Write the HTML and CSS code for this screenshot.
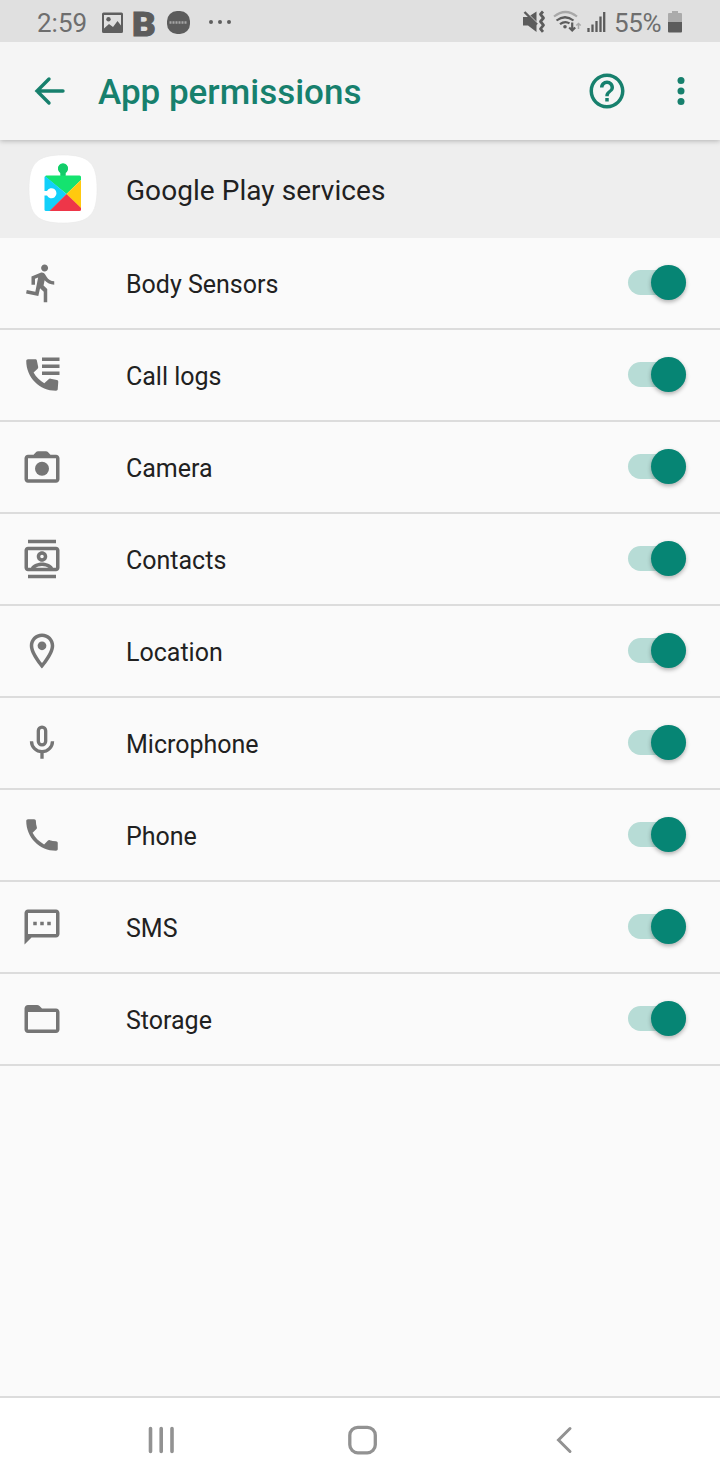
FILE: index.html
```html
<!DOCTYPE html>
<html lang="en">
<head>
    <meta charset="UTF-8">
    <meta name="viewport" content="width=device-width, initial-scale=1.0">
    <title>App permissions</title>
    <link rel="stylesheet" href="styles.css">
</head>
<body>

    <div class="status-bar">
        <span class="clock">2:59</span>
        <svg class="status-left" width="140" height="42" viewBox="98 0 140 42">
            <!-- picture -->
            <path fill="#5f5f5f" fill-rule="evenodd" d="M103.500 12.500h18q1.500 0 1.500 1.500v17.500q0 1.500-1.500 1.500h-18q-1.500 0-1.500-1.500v-17.500q0-1.500 1.500-1.500zM104 15v13.500l5-4.500 4 3 4.500-6 3.500 4.500v-10.500z"/>
            <circle cx="108.500" cy="19.300" r="2.200" fill="#5f5f5f"/>
            <!-- round app icon -->
            <rect x="167" y="11" width="23" height="23" rx="10" fill="#5c5c5c"/>
            <path d="M169.500 22.500h18" stroke="#a5a5a5" stroke-width="2.600" stroke-dasharray="2 1"/>
            <g fill="#5f5f5f">
                <circle cx="211" cy="22" r="2"/>
                <circle cx="220" cy="22" r="2"/>
                <circle cx="229" cy="22" r="2"/>
            </g>
        </svg>
        <span class="app-letter">B</span>
        <svg class="status-right" width="90" height="42" viewBox="520 0 90 42">
            <!-- vibrate -->
            <path fill="#5c5c5c" d="M523 17h5l8.500-5.500v20.500l-8.500-6.500h-5z"/>
            <path d="M523.500 10l14 14" stroke="#e0e0e0" stroke-width="2"/>
            <path d="M524.500 12l12.500 12.500" stroke="#5c5c5c" stroke-width="2.400"/>
            <path d="M543 11.500l-2.500 2.800 3 3.700-3 3.500 3 3.700-3 3.600 2.500 3" fill="none" stroke="#5c5c5c" stroke-width="2.800" stroke-linejoin="round"/>
            <!-- wifi -->
            <g fill="none" stroke="#5c5c5c" stroke-width="2.200">
                <path d="M554 16.500q11.500-9 23 0" stroke="#a8a8a8"/>
                <path d="M556.500 20.500q8.500-6.500 17 0"/>
                <path d="M560 24.200q5-3.800 9.500-.8"/>
                <path d="M572.200 22.500v8m-3-3l3 3 3-3"/>
                <path d="M578.500 29v-5.500m-2.200 2l2.200-2 2.200 2" stroke="#a8a8a8" stroke-width="1.500"/>
            </g>
            <circle cx="565" cy="26.800" r="1.800" fill="#5c5c5c"/>
            <!-- signal -->
            <path d="M588.500 32v-4M592.500 32v-7.500M596.500 32v-11M600.500 32v-15.500M604.200 32v-20" stroke="#5c5c5c" stroke-width="2.300"/>
        </svg>
        <span class="battery-text">55%</span>
        <svg class="battery" width="14" height="42" viewBox="668 0 14 42">
            <path fill="#ababab" d="M672 11h6v2h3q1 0 1 1v8h-14v-8q0-1 1-1h3z"/>
            <path fill="#5c5c5c" d="M668 22h14v9.500q0 1-1 1h-12q-1 0-1-1z"/>
        </svg>
    </div>

    <div class="app-bar">
        <svg class="back" width="32" height="30" viewBox="34 76 32 30">
            <path d="M63 91h-26M49 79l-12 12 12 12" fill="none" stroke="#17806d" stroke-width="3.400" stroke-linecap="round"/>
        </svg>
        <h1>App permissions</h1>
        <svg class="help" width="42" height="42" viewBox="0 0 24 24">
            <path fill="#17806d" d="M11 18h2v-2h-2v2zm1-16C6.480 2 2 6.480 2 12s4.480 10 10 10 10-4.480 10-10S17.520 2 12 2zm0 18c-4.410 0-8-3.590-8-8s3.590-8 8-8 8 3.590 8 8-3.590 8-8 8zm0-14c-2.210 0-4 1.790-4 4h2c0-1.100.9-2 2-2s2 .9 2 2c0 2-3 1.750-3 5h2c0-2.250 3-2.500 3-5 0-2.210-1.790-4-4-4z"/>
        </svg>
        <svg class="more" width="42" height="42" viewBox="0 0 24 24">
            <g fill="#17806d">
                <circle cx="12" cy="6" r="2"/>
                <circle cx="12" cy="12" r="2"/>
                <circle cx="12" cy="18" r="2"/>
            </g>
        </svg>
    </div>

    <div class="app-header">
        <svg class="app-icon" width="70" height="70" viewBox="28 154 70 70">
            <path fill="#fff" stroke="#e6e6e6" stroke-width=".5" d="M63 155c26 0 34 8 34 34s-8 34-34 34-34-8-34-34 8-34 34-34z"/>
            <path fill="#14e36f" d="M46 175.500h14.500v-3a5 5 0 1 1 5 0v3h14q1.500 0 1.500 1.500v3L66.500 194 45 176.500z"/>
            <path fill="#13cc69" d="M60.500 173a5 5 0 1 1 5 0v2.500h-5z"/>
            <path fill="#12d0fa" d="M45 176L66.500 194 50 211h-4q-1.500 0-1.500-1.500v-32z"/>
            <path fill="#ffc90f" d="M81 180v28.500L66.500 194z"/>
            <path fill="#ee3649" d="M66.500 194L81 208v1.500q0 1.500-1.500 1.500h-30z"/>
            <path fill="#fff" d="M44 191h3a5 5 0 1 1 0 4.500h-3z"/>
        </svg>
        <h2>Google Play services</h2>
    </div>

    <div class="permissions">
        <div class="row">
            <svg class="icon" viewBox="0 0 24 24"><path d="M13.490 5.480c1.100 0 2-.9 2-2s-.9-2-2-2-2 .9-2 2 .9 2 2 2zm-3.600 13.900l1-4.400 2.100 2v6h2v-7.500l-2.100-2 .6-3c1.300 1.500 3.300 2.500 5.500 2.500v-2c-1.900 0-3.500-1-4.300-2.400l-1-1.600c-.4-.6-1-1-1.700-1-.3 0-.5.1-.8.1l-5.200 2.200v4.700h2v-3.400l1.800-.7-1.600 8.100-4.900-1-.4 2 7 1.400z"/></svg>
            <span class="label">Body Sensors</span>
            <span class="switch"></span>
        </div>
        <div class="row">
            <svg class="icon" viewBox="0 0 24 24"><path d="M12 2h10v2H12zM12 6h10v2H12zM12 10h10v2H12zM20.500 14.900l-3.600-.8c-.4-.1-.8 0-1.100.3l-2.500 2.300c-2.600-1.500-4.700-3.500-6.100-6.100l2.300-2.200c.3-.3.4-.7.3-1.100l-.7-3.500c-.1-.5-.5-.8-1-.8H4c-.6 0-1 .45-1 1 0 9.390 7.610 17 17 17 .55 0 1-.45 1-1l.3-4.100c0-.5-.3-.9-.8-1z"/></svg>
            <span class="label">Call logs</span>
            <span class="switch"></span>
        </div>
        <div class="row">
            <svg class="icon" viewBox="0 0 24 24"><path d="M20 5h-3.170l-1.200-1.300c-.38-.45-.9-.7-1.500-.7H9.870c-.6 0-1.120.25-1.500.7L7.170 5H4c-1.100 0-2 .9-2 2v12c0 1.100.9 2 2 2h16c1.100 0 2-.9 2-2V7c0-1.100-.9-2-2-2zm0 14H4V7h16v12z"/><circle cx="12" cy="13" r="4"/></svg>
            <span class="label">Camera</span>
            <span class="switch"></span>
        </div>
        <div class="row">
            <svg class="icon" viewBox="0 0 24 24"><path d="M4 1h16v2H4zM4 21h16v2H4zM20 5H4c-1.100 0-2 .9-2 2v10c0 1.100.9 2 2 2h16c1.100 0 2-.9 2-2V7c0-1.100-.9-2-2-2zM8.210 17c.7-.47 2.460-1 3.790-1s3.090.53 3.790 1H8.210zM20 17h-1.680c-.76-2.080-4.440-3-6.320-3s-5.560.92-6.320 3H4V7h16v10zM12 13.500c1.650 0 3-1.350 3-3s-1.350-3-3-3-3 1.350-3 3 1.350 3 3 3zm0-4c.55 0 1 .45 1 1s-.45 1-1 1-1-.45-1-1 .45-1 1-1z"/></svg>
            <span class="label">Contacts</span>
            <span class="switch"></span>
        </div>
        <div class="row">
            <svg class="icon" viewBox="0 0 24 24"><path d="M12 2C8.130 2 5 5.130 5 9c0 5.250 7 13 7 13s7-7.750 7-13c0-3.870-3.130-7-7-7zM7 9c0-2.760 2.240-5 5-5s5 2.240 5 5c0 2.880-2.880 7.190-5 9.880C9.920 16.210 7 11.850 7 9z"/><circle cx="12" cy="9" r="2.500"/></svg>
            <span class="label">Location</span>
            <span class="switch"></span>
        </div>
        <div class="row">
            <svg class="icon mic" viewBox="0 0 24 24"><rect x="9.900" y="2.900" width="4.200" height="10.200" rx="2.100"/><path d="M6 11a6 6 0 0 0 12 0M12 17v4"/></svg>
            <span class="label">Microphone</span>
            <span class="switch"></span>
        </div>
        <div class="row">
            <svg class="icon" viewBox="0 0 24 24"><path d="M20 15.500c-1.250 0-2.450-.2-3.570-.57-.35-.11-.74-.03-1.020.24l-2.200 2.200c-2.830-1.440-5.150-3.750-6.590-6.590l2.200-2.210c.28-.26.36-.65.25-1C8.700 6.450 8.500 5.250 8.500 4c0-.55-.45-1-1-1H4c-.55 0-1 .45-1 1 0 9.390 7.610 17 17 17 .55 0 1-.45 1-1v-3.500c0-.55-.45-1-1-1z"/></svg>
            <span class="label">Phone</span>
            <span class="switch"></span>
        </div>
        <div class="row">
            <svg class="icon" viewBox="0 0 24 24"><path d="M20 2H4c-1.100 0-2 .9-2 2v18l4-4h14c1.100 0 2-.9 2-2V4c0-1.100-.9-2-2-2zm0 14H4V4h16v12zM7 9h2v2H7zM11 9h2v2h-2zM15 9h2v2h-2z"/></svg>
            <span class="label">SMS</span>
            <span class="switch"></span>
        </div>
        <div class="row">
            <svg class="icon" viewBox="0 0 24 24"><path d="M20 6h-8l-1.400-1.400c-.4-.4-.9-.6-1.400-.6H4c-1.100 0-1.990.9-1.990 2L2 18c0 1.100.9 2 2 2h16c1.100 0 2-.9 2-2V8c0-1.100-.9-2-2-2zm0 12H4V8h16v10z"/></svg>
            <span class="label">Storage</span>
            <span class="switch"></span>
        </div>
    </div>

    <div class="nav-bar">
        <svg width="30" height="30" viewBox="0 0 30 30"><path d="M4.500 3.500v23M15.200 3.500v23M26 3.500v23" stroke-width="3.600"/></svg>
        <svg width="30" height="30" viewBox="0 0 30 30"><rect x="1.800" y="2.300" width="25.500" height="25.500" rx="8" stroke-width="3.300"/></svg>
        <svg width="30" height="30" viewBox="0 0 30 30"><path d="M20 3.500L8.500 15 20 26.500" stroke-width="3"/></svg>
    </div>

</body>
</html>
```
FILE: styles.css
```css
* {
    box-sizing: border-box;
}
body {
    margin: 0;
    height: 1480px;
    display: flex;
    flex-direction: column;
    background-color: #fafafa;
    font-family: Roboto, sans-serif;
    color: #212121;
}
svg {
    display: block;
    flex: none;
}
.status-bar {
    display: flex;
    align-items: center;
    height: 42px;
    background-color: #e0e0e0;
    color: #6e6e6e;
    font-size: 26px;
    line-height: 42px;
    white-space: nowrap;
    z-index: 2;
}
.clock {
    width: 98px;
    padding: 4px 0 0 37px;
}
.status-left {
    width: 140px;
}
.app-letter {
    width: 24px;
    margin: 5px 0 0 -105px;
    color: #5c5c5c;
    font-size: 34px;
    font-weight: 900;
    -webkit-text-stroke: 1px #5c5c5c;
    transform: scaleX(1.08);
}
.status-right {
    margin-left: 363px;
}
.battery-text {
    width: 58px;
    padding: 4px 0 0 4px;
    letter-spacing: -0.4px;
}
.app-bar {
    display: flex;
    align-items: center;
    height: 98px;
    padding: 0 18px 0 34px;
    background-color: #f5f5f5;
    box-shadow: 0 1px 5px rgba(0, 0, 0, 0.25);
    z-index: 1;
}
.app-bar h1 {
    flex: 1;
    margin: 2px 0 0 32px;
    color: #17806d;
    font-size: 35px;
    font-weight: 500;
}
.more {
    margin-left: 32px;
}
.app-header {
    display: flex;
    align-items: center;
    gap: 28px;
    height: 98px;
    padding-left: 28px;
    background-color: #eeeeee;
}
.app-header h2 {
    margin: 3px 0 0;
    font-size: 28px;
    font-weight: 400;
    letter-spacing: 0.05px;
}
.permissions {
    flex: 1;
}
.row {
    display: flex;
    align-items: center;
    height: 92px;
    padding: 0 34px 0 21px;
    border-bottom: 2px solid #dcdcdc;
}
.icon {
    width: 42px;
    height: 42px;
    margin-right: 63px;
    fill: #757575;
}
.mic {
    fill: none;
    stroke: #757575;
    stroke-width: 1.9;
}
.label {
    flex: 1;
    padding-top: 3px;
    font-size: 25px;
}
.switch {
    display: flex;
    align-items: center;
    justify-content: flex-end;
    width: 58px;
    height: 25px;
    margin-bottom: 2px;
    border-radius: 13px;
    background-color: #b7dcd6;
}
.switch::after {
    content: "";
    width: 35px;
    height: 35px;
    border-radius: 50%;
    background-color: #068574;
    box-shadow: 0 2px 4px rgba(0, 0, 0, 0.3);
}
.nav-bar {
    display: flex;
    align-items: center;
    justify-content: space-between;
    height: 84px;
    padding: 1px 140px 0 146px;
    border-top: 2px solid #dcdcdc;
    background-color: #fff;
}
.nav-bar svg {
    fill: none;
    stroke: #929292;
    stroke-linecap: round;
}
```
